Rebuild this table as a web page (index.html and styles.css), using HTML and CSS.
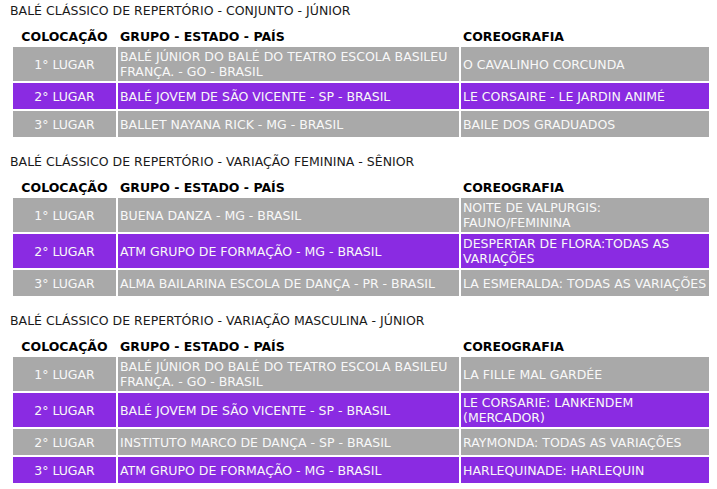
FILE: index.html
```html
<!DOCTYPE html>
<html lang="pt-BR">
<head>
<meta charset="utf-8">
<title>Resultados</title>
<link rel="stylesheet" href="styles.css">
</head>
<body>
<div class="page">
  <section class="result">
    <h2 class="result-title">BALÉ CLÁSSICO DE REPERTÓRIO - CONJUNTO - JÚNIOR</h2>
    <table class="ranking">
      <colgroup><col class="c-place"><col class="c-group"><col class="c-chor"></colgroup>
      <thead>
        <tr><th class="place">COLOCAÇÃO</th><th>GRUPO - ESTADO - PAÍS</th><th>COREOGRAFIA</th></tr>
      </thead>
      <tbody>
        <tr class="gray"><td class="place">1° LUGAR</td><td>BALÉ JÚNIOR DO BALÉ DO TEATRO ESCOLA BASILEU FRANÇA. - GO - BRASIL</td><td>O CAVALINHO CORCUNDA</td></tr>
        <tr class="purple"><td class="place">2° LUGAR</td><td>BALÉ JOVEM DE SÃO VICENTE - SP - BRASIL</td><td>LE CORSAIRE - LE JARDIN ANIMÉ</td></tr>
        <tr class="gray"><td class="place">3° LUGAR</td><td>BALLET NAYANA RICK - MG - BRASIL</td><td>BAILE DOS GRADUADOS</td></tr>
      </tbody>
    </table>
  </section>

  <section class="result">
    <h2 class="result-title">BALÉ CLÁSSICO DE REPERTÓRIO - VARIAÇÃO FEMININA - SÊNIOR</h2>
    <table class="ranking">
      <colgroup><col class="c-place"><col class="c-group"><col class="c-chor"></colgroup>
      <thead>
        <tr><th class="place">COLOCAÇÃO</th><th>GRUPO - ESTADO - PAÍS</th><th>COREOGRAFIA</th></tr>
      </thead>
      <tbody>
        <tr class="gray"><td class="place">1° LUGAR</td><td>BUENA DANZA - MG - BRASIL</td><td>NOITE DE VALPURGIS:<br>FAUNO/FEMININA</td></tr>
        <tr class="purple"><td class="place">2° LUGAR</td><td>ATM GRUPO DE FORMAÇÃO - MG - BRASIL</td><td>DESPERTAR DE FLORA:TODAS AS<br>VARIAÇÕES</td></tr>
        <tr class="gray"><td class="place">3° LUGAR</td><td>ALMA BAILARINA ESCOLA DE DANÇA - PR - BRASIL</td><td class="nowrap">LA ESMERALDA: TODAS AS VARIAÇÕES</td></tr>
      </tbody>
    </table>
  </section>

  <section class="result">
    <h2 class="result-title">BALÉ CLÁSSICO DE REPERTÓRIO - VARIAÇÃO MASCULINA - JÚNIOR</h2>
    <table class="ranking">
      <colgroup><col class="c-place"><col class="c-group"><col class="c-chor"></colgroup>
      <thead>
        <tr><th class="place">COLOCAÇÃO</th><th>GRUPO - ESTADO - PAÍS</th><th>COREOGRAFIA</th></tr>
      </thead>
      <tbody>
        <tr class="gray"><td class="place">1° LUGAR</td><td>BALÉ JÚNIOR DO BALÉ DO TEATRO ESCOLA BASILEU<br>FRANÇA. - GO - BRASIL</td><td>LA FILLE MAL GARDÉE</td></tr>
        <tr class="purple"><td class="place">2° LUGAR</td><td>BALÉ JOVEM DE SÃO VICENTE - SP - BRASIL</td><td>LE CORSARIE: LANKENDEM<br>(MERCADOR)</td></tr>
        <tr class="gray"><td class="place">2° LUGAR</td><td>INSTITUTO MARCO DE DANÇA - SP - BRASIL</td><td>RAYMONDA: TODAS AS VARIAÇÕES</td></tr>
        <tr class="purple"><td class="place">3° LUGAR</td><td>ATM GRUPO DE FORMAÇÃO - MG - BRASIL</td><td>HARLEQUINADE: HARLEQUIN</td></tr>
      </tbody>
    </table>
  </section>
</div>
</body>
</html>
```
FILE: styles.css
```css
html, body {
  margin: 0;
  padding: 0;
  background: #ffffff;
}

body {
  font-family: "DejaVu Sans", Verdana, sans-serif;
  font-size: 12.5px;
  color: #1a1a1a;
}

.page {
  padding: 4px 6px 0 10px;
}

.result + .result {
  margin-top: 16px;
}

.result-title {
  margin: 0 0 7px 0;
  font-size: 12.5px;
  font-weight: normal;
  line-height: 14px;
  color: #1a1a1a;
}

.ranking {
  width: 700px;
  margin-left: 1px;
  table-layout: fixed;
  border-collapse: separate;
  border-spacing: 2px;
}

.c-place { width: 103px; }
.c-group { width: 341px; }
.c-chor { width: 248px; }

.ranking th {
  padding: 2px 2px 1px;
  line-height: 15px;
  font-weight: bold;
  color: #000;
  text-align: left;
}

.ranking td {
  height: 22px;
  padding: 2px 2px;
  line-height: 15px;
  color: #f8f8f8;
  text-align: left;
  vertical-align: middle;
}

.ranking .place {
  text-align: center;
}

.ranking .nowrap {
  white-space: nowrap;
}

.gray td {
  background: #a9a9a9;
}

.purple td {
  background: #8a2be2;
}
```
